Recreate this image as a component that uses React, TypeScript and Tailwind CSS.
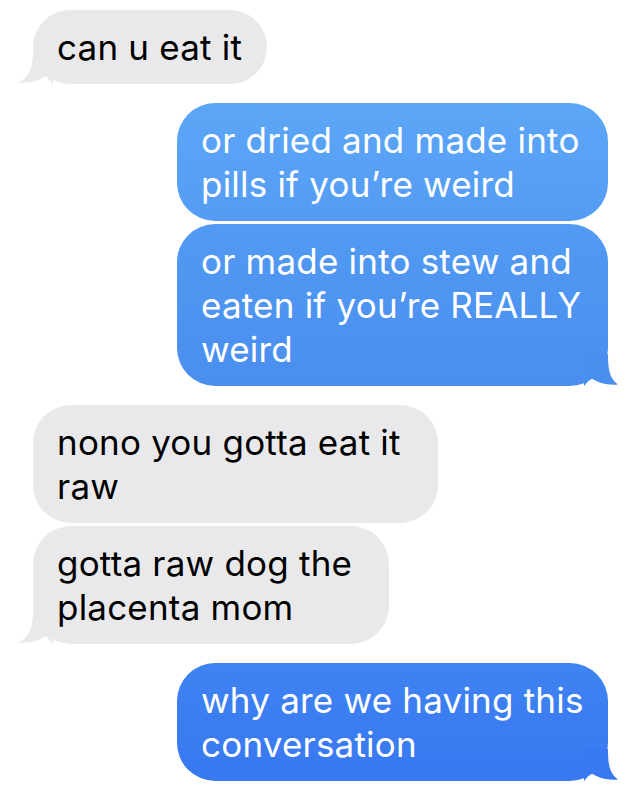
import React from "react";

type Side = "in" | "out";

interface BubbleProps {
  side: Side;
  lines: string[];
  tail?: boolean;
  /** couleurs du dégradé (bleu) : haut -> bas */
  from?: string;
  to?: string;
  className?: string;
}

function Tail({ side, color }: { side: Side; color: string }) {
  if (side === "in") {
    return (
      <svg
        className="absolute bottom-0 left-[-14px]"
        width="34"
        height="32"
        viewBox="0 0 34 32"
      >
        <path
          d="M14 0 C14 14 11 24 0 30.5 C10 31.5 20 29 27 24 L34 32 L34 0 Z"
          fill={color}
        />
      </svg>
    );
  }
  return (
    <svg
      className="absolute bottom-0 right-[-10px]"
      width="34"
      height="32"
      viewBox="0 0 34 32"
    >
      <path
        d="M24 0 C24 14 25 24 34 30.5 C24 31.5 14 29 7 24 L0 32 L0 0 Z"
        fill={color}
      />
    </svg>
  );
}

function Bubble({ side, lines, tail, from, to, className = "" }: BubbleProps) {
  const isOut = side === "out";
  const grad = isOut ? { backgroundImage: `linear-gradient(${from}, ${to})` } : undefined;
  return (
    <div
      className={
        "relative rounded-[38px] px-[24px] py-[15px] text-[35px] leading-[44px] " +
        (isOut ? "ml-auto mr-[31px] text-white" : "ml-[33px] mr-auto bg-[#e9e9eb] text-black") +
        " " +
        className
      }
      style={grad}
    >
      {tail && <Tail side={side} color={isOut ? (to as string) : "#e9e9eb"} />}
      <p className="relative whitespace-nowrap tracking-[0.2px]">
        {lines.map((l, i) => (
          <React.Fragment key={i}>
            {l}
            {i < lines.length - 1 && <br />}
          </React.Fragment>
        ))}
      </p>
    </div>
  );
}

export default function App() {
  return (
    <div
      className="flex h-[796px] w-[639px] flex-col overflow-hidden bg-white pt-[10px]"
      style={{ fontFamily: "Inter, 'Liberation Sans', sans-serif" }}
    >
      <Bubble side="in" tail lines={["can u eat it"]} className="w-[234px]" />

      <Bubble
        side="out"
        lines={["or dried and made into", "pills if you\u2019re weird"]}
        from="#5ca6f7"
        to="#549cf3"
        className="mt-[19px] w-[431px]"
      />
      <Bubble
        side="out"
        tail
        lines={["or made into stew and", "eaten if you\u2019re REALLY", "weird"]}
        from="#529af3"
        to="#4a8eef"
        className="mt-[3px] w-[431px]"
      />

      <Bubble
        side="in"
        lines={["nono you gotta eat it", "raw"]}
        className="mt-[19px] w-[405px]"
      />
      <Bubble
        side="in"
        tail
        lines={["gotta raw dog the", "placenta mom"]}
        className="mt-[3px] w-[356px]"
      />

      <Bubble
        side="out"
        tail
        lines={["why are we having this", "conversation"]}
        from="#3f83f2"
        to="#3878f0"
        className="mt-[19px] w-[431px]"
      />
    </div>
  );
}
